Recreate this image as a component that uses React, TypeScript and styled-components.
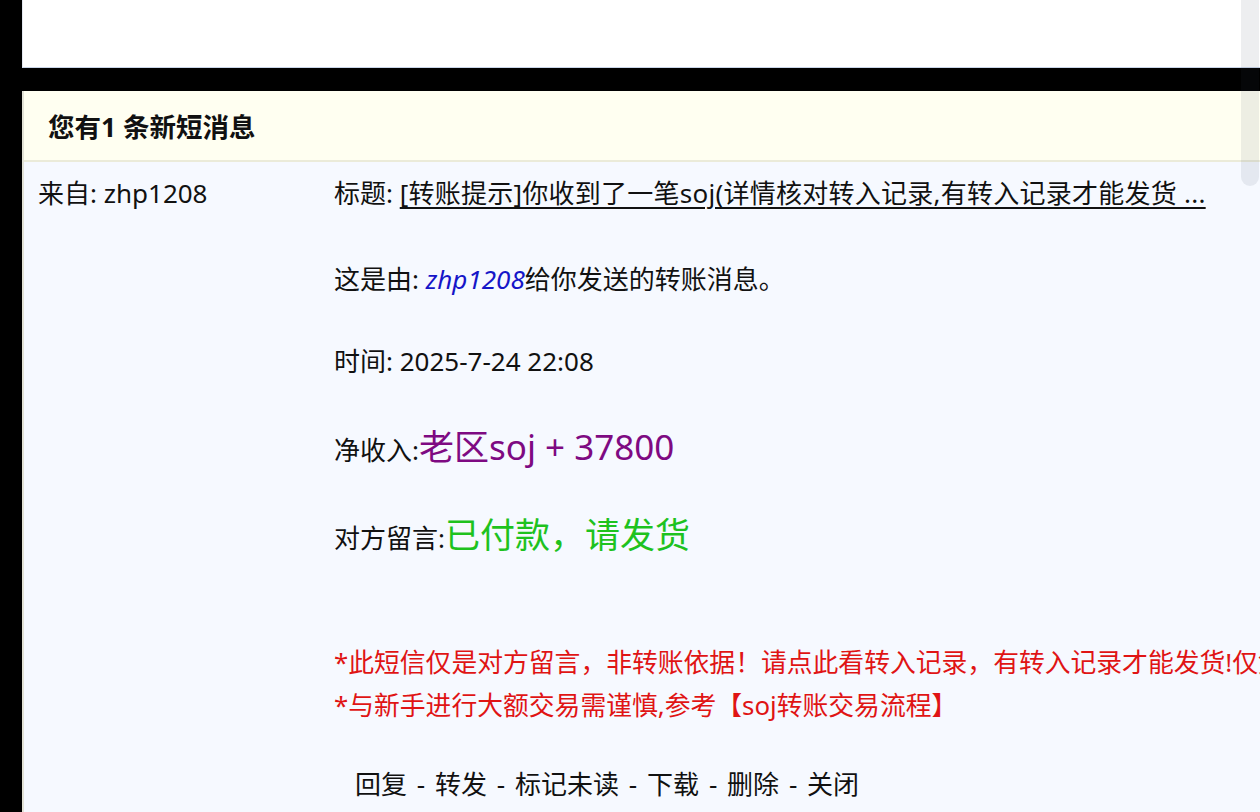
import React from 'react';
import styled, { createGlobalStyle } from 'styled-components';

const GlobalStyle = createGlobalStyle`
  html, body {
    margin: 0;
    padding: 0;
    background: #000;
    overflow: hidden;
  }
  body {
    font-family: "Noto Sans", "Noto Sans CJK SC", sans-serif;
    color: #111;
  }
`;

const Page = styled.div`
  position: relative;
  width: 1260px;
  height: 812px;
  padding-left: 22px;
  box-sizing: border-box;
  background: #000;
  overflow: hidden;
`;

const TopPanel = styled.div`
  height: 67px;
  background: #fff;
  border-bottom: 1px solid #c9d5e8;
  border-left: 1px solid #e4e8f0;
`;

const MessagePanel = styled.div`
  margin-top: 23px;
  min-height: 730px;
  background: #f6f9ff;
  border-left: 2px solid #e2e2d6;
`;

const Header = styled.div`
  display: flex;
  align-items: center;
  height: 69px;
  padding-left: 24px;
  background: #fffff1;
  border-bottom: 2px solid #ebebd9;
  font-size: 26.5px;
  font-weight: 700;
  color: #111;
`;

const Body = styled.div`
  display: grid;
  grid-template-columns: 296px 1fr;
  padding: 10px 0 0 14px;
`;

const Sender = styled.div`
  font-size: 26px;
  line-height: 43px;
  white-space: nowrap;
`;

const Content = styled.div`
  font-size: 26px;
  white-space: nowrap;
  min-width: 0;
  overflow: hidden;
`;

const Line = styled.div<{ $top?: number; $indent?: number }>`
  line-height: 43px;
  height: 43px;
  margin-top: ${p => p.$top ?? 0}px;
  padding-left: ${p => p.$indent ?? 0}px;
`;

const TitleLink = styled.a`
  color: #111;
  text-decoration: underline;
  text-underline-offset: 4px;
  text-decoration-thickness: 1.5px;
  letter-spacing: 0.25px;
`;

const UserName = styled.span`
  color: #1515c8;
  font-style: italic;
`;

const Amount = styled.span<{ $color: string }>`
  font-size: 35px;
  color: ${p => p.$color};
`;

const Warning = styled.div<{ $top?: number }>`
  color: #e01414;
  font-size: 25.8px;
  line-height: 43px;
  height: 43px;
  margin-top: ${p => p.$top ?? 0}px;
`;

const Action = styled.a`
  color: #111;
  text-decoration: none;
`;

const Sep = styled.span`
  display: inline-block;
  width: 28px;
  text-align: center;
`;

const ScrollThumb = styled.div`
  position: absolute;
  top: 0;
  right: 1px;
  width: 18px;
  height: 186px;
  border-radius: 0 0 9px 9px;
  background: rgba(60, 70, 90, 0.09);
`;

const actions = ['回复', '转发', '标记未读', '下载', '删除', '关闭'];

const App = () => {
  return (
    <>
      <GlobalStyle />
      <Page>
        <TopPanel />
        <MessagePanel>
          <Header>您有1 条新短消息</Header>
          <Body>
            <Sender>来自: zhp1208</Sender>
            <Content>
              <Line>
                标题: <TitleLink href="#">[转账提示]你收到了一笔soj(详情核对转入记录,有转入记录才能发货 ...</TitleLink>
              </Line>
              <Line $top={43}>
                这是由: <UserName>zhp1208</UserName>给你发送的转账消息。
              </Line>
              <Line $top={39}>时间: 2025-7-24 22:08</Line>
              <Line $top={42}>
                净收入:<Amount $color="#7e0a82">老区soj + 37800</Amount>
              </Line>
              <Line $top={45}>
                对方留言:<Amount $color="#1ec21e">已付款，请发货</Amount>
              </Line>
              <Warning $top={85}>
                *此短信仅是对方留言，非转账依据！请点此看转入记录，有转入记录才能发货!仅凭短信发货后果自负!
              </Warning>
              <Warning>*与新手进行大额交易需谨慎,参考【soj转账交易流程】</Warning>
              <Line $top={36} $indent={21}>
                {actions.map((a, i) => (
                  <React.Fragment key={a}>
                    {i > 0 && <Sep>-</Sep>}
                    <Action href="#">{a}</Action>
                  </React.Fragment>
                ))}
              </Line>
            </Content>
          </Body>
        </MessagePanel>
        <ScrollThumb />
      </Page>
    </>
  );
};

export default App;
